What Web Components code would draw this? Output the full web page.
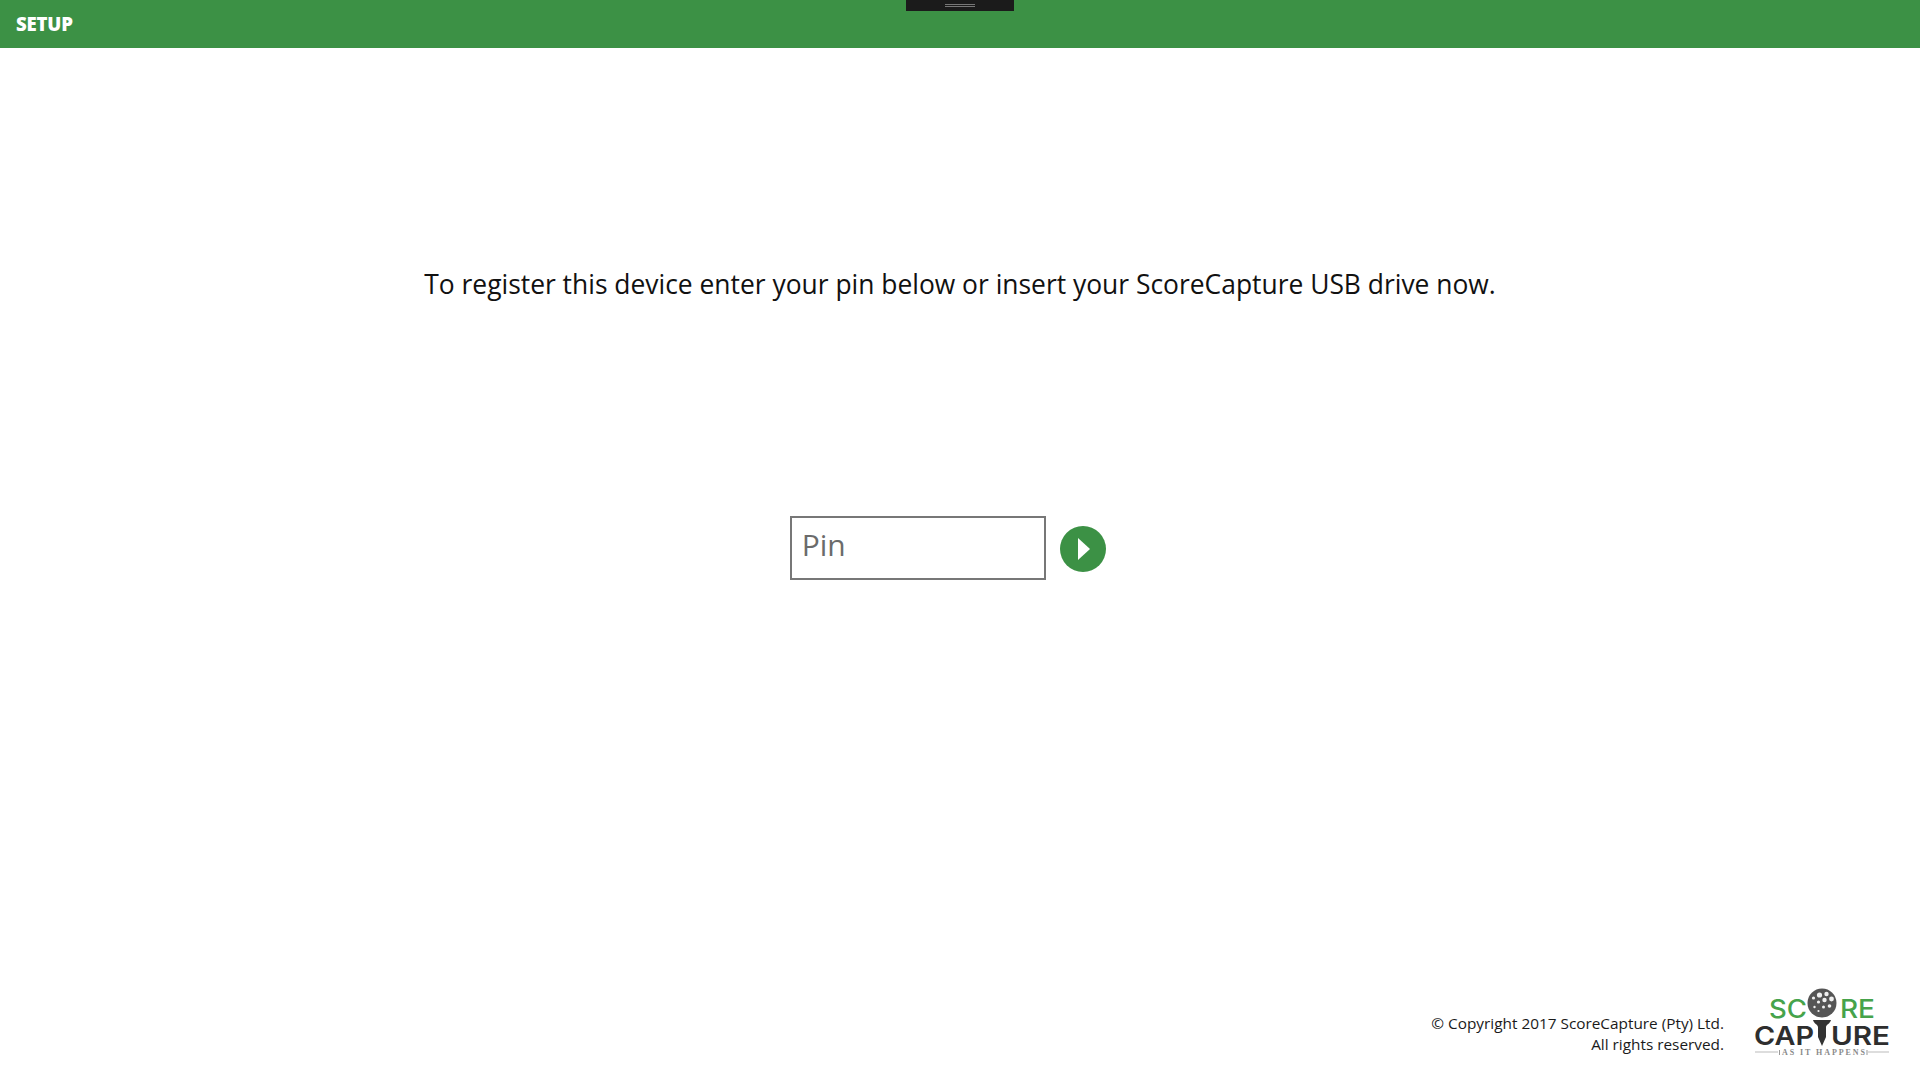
<!DOCTYPE html>
<html>
<head>
<meta charset="utf-8">
<title>Setup</title>
<style>
  html, body { margin: 0; height: 100%; background: #fff; }
  body { font-family: "Open Sans", "Noto Sans", sans-serif; color: #111; }
</style>
</head>
<body>
<sc-setup-page></sc-setup-page>

<script>
class Component extends HTMLElement {
  constructor(template) {
    super()
    const _template = document.createElement('template')
    _template.innerHTML = template
    this.attachShadow({ mode: 'open' })
    this.shadowRoot.appendChild(_template.content.cloneNode(true))
  }
}

class ScTitleBar extends Component {
  constructor() {
    super(`
      <style>
      :host {
        display: flex;
        align-items: center;
        justify-content: center;
        position: relative;
        height: 48px;
        padding-left: 16px;
        background: #3c9145;
        color: #fff;
        font-size: 18.6px;
        font-weight: 800;
      }
      .title { flex: 1; letter-spacing: -0.2px; margin-top: -2px; }
      .handle {
        position: absolute;
        top: 0;
        left: 906px;
        width: 108px;
        height: 11px;
        background: #1b1b1b;
      }
      .handle::after {
        content: '';
        position: absolute;
        left: 39px;
        top: 4px;
        width: 30px;
        height: 1px;
        border-top: 1px solid #777;
        border-bottom: 1px solid #777;
      }
      </style>
      <span class="title"><slot></slot></span>
      <div class="handle"></div>
    `)
  }
}

class ScPinForm extends Component {
  constructor() {
    super(`
      <style>
      :host {
        display: flex;
        align-items: center;
        justify-content: center;
        gap: 14px;
        padding-right: 24px;
      }
      .box {
        box-sizing: border-box;
        width: 256px;
        height: 64px;
        padding: 0 0 8px 10px;
        border: 2px solid #777;
        display: flex;
        align-items: center;
        font-size: 30px;
        color: #6b6b6b;
      }
      .go {
        width: 46px;
        height: 46px;
        margin-top: 1px;
        margin-left: 0.5px;
        border-radius: 50%;
        background: #3c9145;
        display: flex;
        align-items: center;
        justify-content: center;
      }
      svg { display: block; margin-left: 2px; }
      </style>
      <div class="box"><slot></slot></div>
      <div class="go">
        <svg width="12" height="22" viewBox="0 0 12 22"><path d="M0 0L12 11L0 22Z" fill="#fff"/></svg>
      </div>
    `)
  }
}

class ScLogo extends Component {
  constructor() {
    super(`
      <style>
      :host { display: block; width: 140px; height: 90px; }
      svg { display: block; }
      text { font-family: "Inter", "Lato", sans-serif; }
      .tag { font-family: "Liberation Serif", serif; }
      </style>
      <svg width="140" height="90" viewBox="0 0 140 90">
        <text x="17" y="48" font-size="25" font-weight="500" fill="#46a34b" textLength="38" lengthAdjust="spacingAndGlyphs">SC</text>
        <text x="88" y="48" font-size="25" font-weight="500" fill="#46a34b" textLength="35" lengthAdjust="spacingAndGlyphs">RE</text>
        <circle cx="70" cy="33" r="14.500" fill="#555"/>
        <g fill="#f0f0f0">
          <circle cx="67.500" cy="25" r="2.600"/><circle cx="74.500" cy="24" r="2.200"/><circle cx="79.500" cy="29" r="2.400"/>
          <circle cx="72.500" cy="30" r="2.200"/><circle cx="61.500" cy="28" r="1.600"/><circle cx="66.500" cy="32" r="1.600"/>
          <circle cx="77.500" cy="36" r="1.800"/><circle cx="71.500" cy="37" r="1.500"/><circle cx="62.500" cy="37" r="1.200"/>
          <circle cx="66.500" cy="41" r="1.100"/>
        </g>
        <path d="M61 50H79C78 54 74.500 54 74 57V67L70 76L66 67V57C65.500 54 62 54 61 50Z" fill="#333"/>
        <text x="2" y="75" font-size="26" font-weight="600" fill="#2e2e2e" textLength="60" lengthAdjust="spacingAndGlyphs">CAP</text>
        <text x="79" y="75" font-size="26" font-weight="600" fill="#2e2e2e" textLength="59" lengthAdjust="spacingAndGlyphs">URE</text>
        <path d="M3 82H26M116 82H137" stroke="#bbb" stroke-width="1"/>
        <path d="M27.500 80V85M115 80V85" stroke="#999" stroke-width="1"/>
        <text class="tag" x="30" y="85" font-size="8" font-weight="700" fill="#8a8a8a" textLength="83" lengthAdjust="spacing">AS IT HAPPENS</text>
      </svg>
    `)
  }
}

class ScFooter extends Component {
  constructor() {
    super(`
      <style>
      :host {
        display: flex;
        justify-content: flex-end;
        align-items: flex-end;
        gap: 28px;
        padding: 0 28px 20px 0;
      }
      .legal {
        text-align: right;
        font-size: 15.35px;
        line-height: 21px;
        color: #1a1a1a;
        padding-bottom: 5px;
      }
      </style>
      <div class="legal"><slot></slot></div>
      <sc-logo></sc-logo>
    `)
  }
}

class ScSetupPage extends Component {
  constructor() {
    super(`
      <style>
      :host {
        display: flex;
        flex-direction: column;
        height: 1080px;
        overflow: hidden;
      }
      .message {
        margin: 0;
        padding-top: 205px;
        height: 62px;
        line-height: 62px;
        text-align: center;
        font-size: 26.41px;
        color: #111;
      }
      sc-pin-form { margin-top: 201px; }
      sc-footer { margin-top: auto; }
      </style>
      <sc-title-bar>SETUP</sc-title-bar>
      <p class="message">To register this device enter your pin below or insert your ScoreCapture USB drive now.</p>
      <sc-pin-form>Pin</sc-pin-form>
      <sc-footer>&copy; Copyright 2017 ScoreCapture (Pty) Ltd.<br>All rights reserved.</sc-footer>
    `)
  }
}

window.customElements.define('sc-title-bar', ScTitleBar)
window.customElements.define('sc-pin-form', ScPinForm)
window.customElements.define('sc-logo', ScLogo)
window.customElements.define('sc-footer', ScFooter)
window.customElements.define('sc-setup-page', ScSetupPage)
</script>
</body>
</html>
